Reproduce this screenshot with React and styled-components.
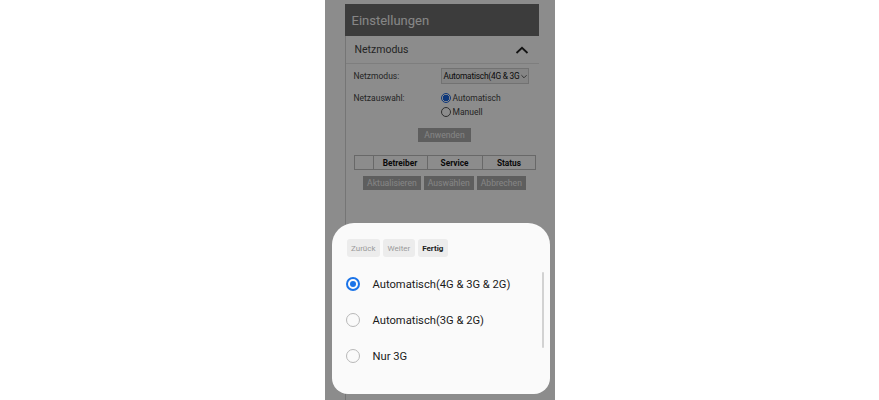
import React from "react";
import styled, { createGlobalStyle } from "styled-components";

const GlobalStyle = createGlobalStyle`
  html, body {
    margin: 0;
    padding: 0;
    background: #ffffff;
    font-family: Roboto, "Noto Sans", Arial, sans-serif;
  }
`;

const Stage = styled.div`
  width: 879px;
  height: 400px;
  display: flex;
  justify-content: center;
`;

const Phone = styled.div`
  position: relative;
  width: 230px;
  height: 400px;
  overflow: hidden;
  background: #ffffff;
  padding: 4px 16px 0 20px;
  box-sizing: border-box;
`;

const Header = styled.div`
  height: 32px;
  background: #6e6e6e;
  color: #f4f4f4;
  font-size: 13px;
  display: flex;
  align-items: center;
  padding-left: 7px;
`;

const Panel = styled.div`
  border-left: 1px solid #d6d6d6;
  height: 400px;
`;

const SectionHead = styled.div`
  height: 27px;
  display: flex;
  align-items: center;
  justify-content: space-between;
  padding: 0 10px 0 9px;
  border-bottom: 1px solid #e6e6e6;
  font-size: 10.5px;
  color: #444;
`;

const Form = styled.div`
  padding: 4px 3px 0 8px;
  font-size: 8.5px;
  color: #444;
`;

const Row = styled.div`
  display: flex;
  align-items: ${(p) => (p.$top ? "flex-start" : "center")};
  margin-top: ${(p) => p.$mt || 0}px;
`;

const Label = styled.div`
  width: 87px;
  flex-shrink: 0;
`;

const Select = styled.div`
  width: 88px;
  height: 16px;
  background: #f2f2f2;
  border: 1px solid #cfcfcf;
  box-sizing: border-box;
  display: flex;
  align-items: center;
  padding-left: 2px;
  font-size: 8.3px;
  color: #111;
  white-space: nowrap;
  overflow: hidden;
  letter-spacing: -0.2px;
`;

const RadioList = styled.div`
  display: flex;
  flex-direction: column;
  gap: 3px;
`;

const RadioItem = styled.div`
  display: flex;
  align-items: center;
  gap: 2px;
  height: 11px;
`;

const SmallRadio = styled.span`
  width: 10px;
  height: 10px;
  border-radius: 50%;
  box-sizing: border-box;
  border: 1px solid ${(p) => (p.$on ? "#1a66e0" : "#555")};
  background: ${(p) => (p.$on ? "radial-gradient(circle, #1a66e0 55%, #fff 60%)" : "#fff")};
`;

const Center = styled.div`
  display: flex;
  justify-content: center;
  gap: 3px;
  margin-top: ${(p) => p.$mt || 0}px;
`;

const GrayButton = styled.div`
  height: 14px;
  padding: 0 ${(p) => p.$px || 4}px;
  background: #ababab;
  color: #f2f2f2;
  font-size: 8.6px;
  display: flex;
  align-items: center;
`;

const Table = styled.div`
  display: grid;
  grid-template-columns: 18px 54px 55px 54px;
  width: 182px;
  margin-top: 13px;
  border: 1px solid #bdbdbd;
  height: 15px;
  box-sizing: border-box;
`;

const Th = styled.div`
  border-left: ${(p) => (p.$first ? "none" : "1px solid #bdbdbd")};
  display: flex;
  align-items: center;
  justify-content: center;
  font-weight: 700;
  font-size: 8.3px;
  color: #111;
`;

const Overlay = styled.div`
  position: absolute;
  inset: 0;
  background: rgba(0, 0, 0, 0.45);
`;

const Sheet = styled.div`
  position: absolute;
  left: 7px;
  right: 5px;
  bottom: 6px;
  height: 171px;
  background: #fafafa;
  border-radius: 22px 22px 16px 16px;
  padding: 16px 15px 0 15px;
  box-sizing: border-box;
`;

const Toolbar = styled.div`
  display: flex;
  gap: 3px;
`;

const ToolButton = styled.div`
  height: 18px;
  padding: 0 4.5px;
  background: #ececec;
  border-radius: 3px;
  font-size: 8px;
  display: flex;
  align-items: center;
  color: ${(p) => (p.$strong ? "#222" : "#9a9a9a")};
  font-weight: ${(p) => (p.$strong ? 700 : 400)};
`;

const Options = styled.div`
  margin-top: 9px;
`;

const Option = styled.div`
  height: 36px;
  display: flex;
  align-items: center;
  gap: 13px;
  font-size: 11.2px;
  color: #1b1b1b;
`;

const BigRadio = styled.span`
  width: 14px;
  height: 14px;
  margin-left: -1px;
  border-radius: 50%;
  box-sizing: border-box;
  border: ${(p) => (p.$on ? "2px solid #1a73e8" : "1px solid #b8b8b8")};
  display: flex;
  align-items: center;
  justify-content: center;
  &::after {
    content: "";
    width: 6px;
    height: 6px;
    border-radius: 50%;
    background: ${(p) => (p.$on ? "#1a73e8" : "transparent")};
  }
`;

const Scrollbar = styled.div`
  position: absolute;
  right: 6px;
  top: 49px;
  width: 2px;
  height: 76px;
  border-radius: 1px;
  background: #d2d2d2;
`;

const ChevronUp = () => (
  <svg width="14" height="8" viewBox="0 0 14 8">
    <path d="M1.5 7 L7 1.8 L12.5 7" fill="none" stroke="#222" strokeWidth="1.8" />
  </svg>
);

const ChevronDown = () => (
  <svg width="7" height="5" viewBox="0 0 7 5" style={{ marginLeft: 2 }}>
    <path d="M0.5 1 L3.5 4 L6.5 1" fill="none" stroke="#333" strokeWidth="0.9" />
  </svg>
);

const options = ["Automatisch(4G & 3G & 2G)", "Automatisch(3G & 2G)", "Nur 3G"];

export default function App() {
  return (
    <Stage>
      <GlobalStyle />
      <Phone>
        <Header>Einstellungen</Header>
        <Panel>
          <SectionHead>
            <span>Netzmodus</span>
            <ChevronUp />
          </SectionHead>
          <Form>
            <Row>
              <Label>Netzmodus:</Label>
              <Select>
                Automatisch(4G &amp; 3G
                <ChevronDown />
              </Select>
            </Row>
            <Row $top $mt={8}>
              <Label style={{ paddingTop: 1 }}>Netzauswahl:</Label>
              <RadioList>
                <RadioItem>
                  <SmallRadio $on />
                  Automatisch
                </RadioItem>
                <RadioItem>
                  <SmallRadio />
                  Manuell
                </RadioItem>
              </RadioList>
            </Row>
            <Center $mt={11}>
              <GrayButton $px={6}>Anwenden</GrayButton>
            </Center>
            <Table>
              <Th $first />
              <Th>Betreiber</Th>
              <Th>Service</Th>
              <Th>Status</Th>
            </Table>
            <Center $mt={6}>
              <GrayButton>Aktualisieren</GrayButton>
              <GrayButton>Auswählen</GrayButton>
              <GrayButton>Abbrechen</GrayButton>
            </Center>
          </Form>
        </Panel>
        <Overlay />
        <Sheet>
          <Toolbar>
            <ToolButton>Zurück</ToolButton>
            <ToolButton>Weiter</ToolButton>
            <ToolButton $strong>Fertig</ToolButton>
          </Toolbar>
          <Options>
            {options.map((o, i) => (
              <Option key={o}>
                <BigRadio $on={i === 0} />
                {o}
              </Option>
            ))}
          </Options>
          <Scrollbar />
        </Sheet>
      </Phone>
    </Stage>
  );
}
